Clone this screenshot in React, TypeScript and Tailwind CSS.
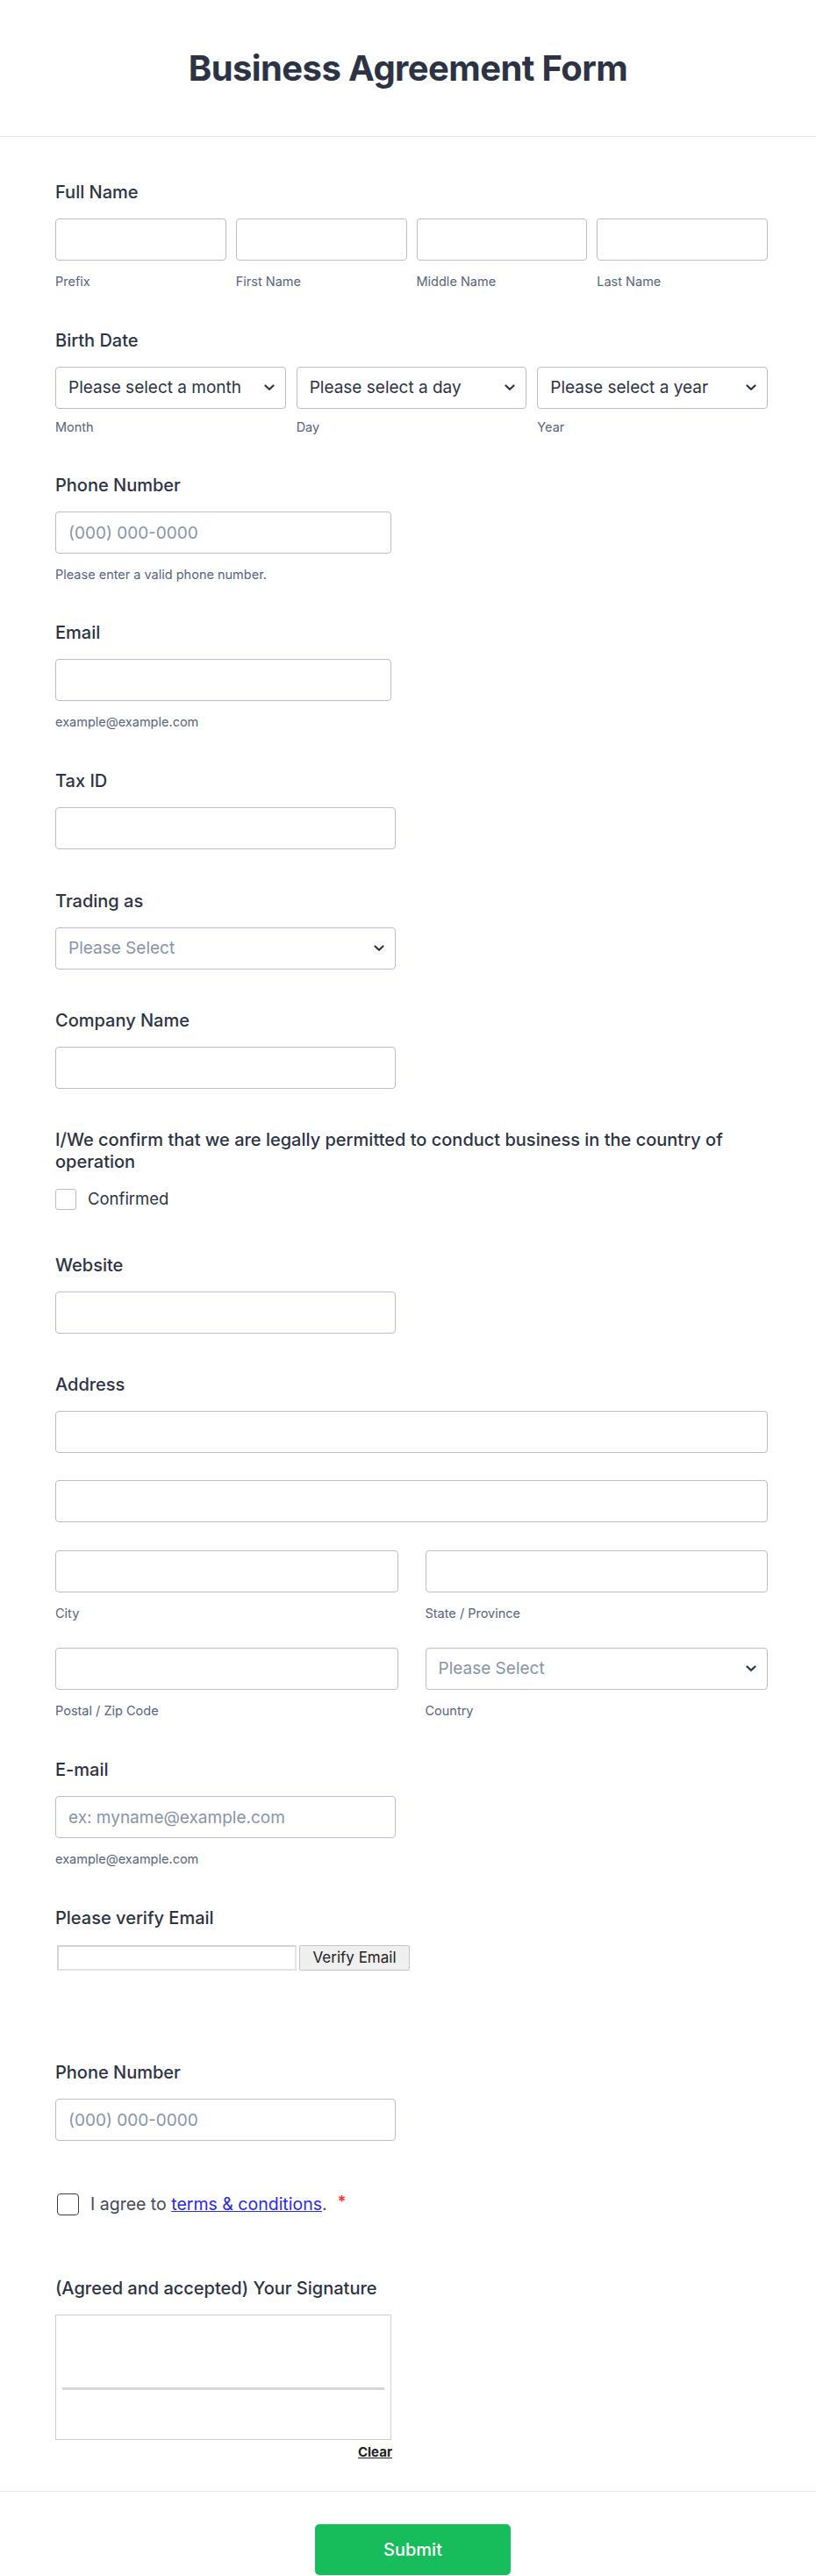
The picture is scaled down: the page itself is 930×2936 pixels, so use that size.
import React from "react";

const labelCls = "block text-[20px] leading-6 font-medium text-[#2c3345]";
const subCls = "block text-[14.5px] leading-[18px] text-[#57647e]";
const inputCls =
  "block h-12 w-full rounded-[4px] border border-[#b8bdc9] bg-white px-[14px] text-[19px] text-[#2c3345] placeholder:text-[#8894ab] outline-none";

function Chevron() {
  return (
    <svg width="12" height="8" viewBox="0 0 12 8" fill="none" className="pointer-events-none absolute right-[13px] top-1/2 -translate-y-1/2">
      <path d="M1.5 1.5L6 5.8L10.5 1.5" stroke="#2c3345" strokeWidth="2.2" strokeLinecap="round" strokeLinejoin="round" />
    </svg>
  );
}

function Select({ text, muted }: { text: string; muted?: boolean }) {
  return (
    <div className="relative">
      <select
        className={`block h-12 w-full appearance-none rounded-[4px] border border-[#b8bdc9] bg-white pl-[14px] pr-8 text-[19px] outline-none ${
          muted ? "text-[#8894ab]" : "text-[#2c3345]"
        }`}
        defaultValue=""
      >
        <option value="">{text}</option>
      </select>
      <Chevron />
    </div>
  );
}

function Sub({ children, tight }: { children: React.ReactNode; tight?: boolean }) {
  return <span className={`${subCls} ${tight ? "mt-[12px]" : "mt-[15px]"}`}>{children}</span>;
}

export default function App() {
  return (
    <div className="min-h-screen bg-white font-[Inter,sans-serif] text-[#2c3345]">
      <header className="flex h-[156px] items-center justify-center border-b border-[#e3e5ea]">
        <h1 className="text-[40px] font-bold leading-none tracking-[-0.6px] text-[#2c3345]">Business Agreement Form</h1>
      </header>

      <form className="pl-[63px] pr-[55px] pt-[51px]" onSubmit={(e) => e.preventDefault()}>
        {/* Full Name */}
        <div className="mb-[46px]">
          <label className={`${labelCls} mb-[18px]`}>Full Name</label>
          <div className="grid grid-cols-4 gap-[11px]">
            {["Prefix", "First Name", "Middle Name", "Last Name"].map((s) => (
              <div key={s}>
                <input className={inputCls} />
                <Sub>{s}</Sub>
              </div>
            ))}
          </div>
        </div>

        {/* Birth Date */}
        <div className="mb-[45px]">
          <label className={`${labelCls} mb-[18px]`}>Birth Date</label>
          <div className="grid grid-cols-3 gap-[12px]">
            {[
              ["Please select a month", "Month"],
              ["Please select a day", "Day"],
              ["Please select a year", "Year"],
            ].map(([t, s]) => (
              <div key={s}>
                <Select text={t} />
                <Sub tight>{s}</Sub>
              </div>
            ))}
          </div>
        </div>

        {/* Phone Number */}
        <div className="mb-[45px] w-[383px]">
          <label className={`${labelCls} mb-[18px]`}>Phone Number</label>
          <input className={inputCls} placeholder="(000) 000-0000" />
          <Sub>Please enter a valid phone number.</Sub>
        </div>

        {/* Email */}
        <div className="mb-[46px] w-[383px]">
          <label className={`${labelCls} mb-[18px]`}>Email</label>
          <input className={inputCls} />
          <Sub>example@example.com</Sub>
        </div>

        {/* Tax ID */}
        <div className="mb-[47px] w-[388px]">
          <label className={`${labelCls} mb-[18px]`}>Tax ID</label>
          <input className={inputCls} />
        </div>

        {/* Trading as */}
        <div className="mb-[46px] w-[388px]">
          <label className={`${labelCls} mb-[18px]`}>Trading as</label>
          <Select text="Please Select" muted />
        </div>

        {/* Company Name */}
        <div className="mb-[46px] w-[388px]">
          <label className={`${labelCls} mb-[18px]`}>Company Name</label>
          <input className={inputCls} />
        </div>

        {/* Legal confirmation */}
        <div className="mb-[51px]">
          <label className="mb-[18px] block text-[20px] font-medium leading-[25px] text-[#2c3345]">
            I/We confirm that we are legally permitted to conduct business in the country of operation
          </label>
          <label className="flex h-6 items-center gap-[13px]">
            <span className="block h-6 w-6 rounded-[3px] border border-[#b8bdc9] bg-white" />
            <span className="text-[18.5px] text-[#2c3345]">Confirmed</span>
          </label>
        </div>

        {/* Website */}
        <div className="mb-[46px] w-[388px]">
          <label className={`${labelCls} mb-[18px]`}>Website</label>
          <input className={inputCls} />
        </div>

        {/* Address */}
        <div className="mb-[46px]">
          <label className={`${labelCls} mb-[18px]`}>Address</label>
          <input className={`${inputCls} mb-[31px]`} />
          <input className={`${inputCls} mb-[32px]`} />
          <div className="grid grid-cols-2 gap-x-[31px] gap-y-[30px]">
            <div>
              <input className={inputCls} />
              <Sub>City</Sub>
            </div>
            <div>
              <input className={inputCls} />
              <Sub>State / Province</Sub>
            </div>
            <div>
              <input className={inputCls} />
              <Sub>Postal / Zip Code</Sub>
            </div>
            <div>
              <Select text="Please Select" muted />
              <Sub>Country</Sub>
            </div>
          </div>
        </div>

        {/* E-mail */}
        <div className="mb-[46px] w-[388px]">
          <label className={`${labelCls} mb-[18px]`}>E-mail</label>
          <input className={inputCls} placeholder="ex: myname@example.com" />
          <Sub>example@example.com</Sub>
        </div>

        {/* Verify email */}
        <div className="mb-[104px]">
          <label className={`${labelCls} mb-[19px]`}>Please verify Email</label>
          <div className="flex items-center gap-[3px] pl-[2px]">
            <input className="block h-[29px] w-[273px] border-2 border-t-[#d4d4d4] border-l-[#d4d4d4] border-b-[#e3e3e3] border-r-[#e3e3e3] bg-white outline-none" />
            <button
              type="button"
              className="h-[29px] w-[126px] rounded-[2px] border border-[#c4c4c4] bg-[#efefef] text-[17px] text-[#222]"
            >
              Verify Email
            </button>
          </div>
        </div>

        {/* Phone Number (second) */}
        <div className="mb-[60px] w-[388px]">
          <label className={`${labelCls} mb-[18px]`}>Phone Number</label>
          <input className={inputCls} placeholder="(000) 000-0000" />
        </div>

        {/* Terms */}
        <div className="mb-[71px] flex h-[25px] items-center pl-[2px]">
          <span className="block h-[25px] w-[25px] rounded-[4px] border-[1.5px] border-[#3a3f4b] bg-white" />
          <span className="ml-[13px] text-[19.5px] text-[#454a57]">
            I agree to{" "}
            <a href="#" className="text-[#2929e8] underline">
              terms &amp; conditions
            </a>
            .
          </span>
          <span className="ml-[12px] -mt-[8px] text-[18px] font-bold leading-none text-[#f23a3c]">*</span>
        </div>

        {/* Signature */}
        <div className="w-[384px]">
          <label className={`${labelCls} mb-[18px]`}>(Agreed and accepted) Your Signature</label>
          <div className="h-[143px] w-[383px] border border-[#cfcfcf] bg-white px-[7px] pt-[82px]">
            <div className="h-[3px] w-full bg-[#d6d6d6]" />
          </div>
          <div className="mt-[6px] flex justify-end">
            <span className="text-[15px] font-bold leading-4 text-[#222] underline">Clear</span>
          </div>
        </div>
        <div className="h-[36px]" />
      </form>

      <div className="flex justify-center border-t border-[#e6e8ec] pl-[66px] pr-[55px] pt-[37px] pb-[2px]">
        <button
          type="submit"
          className="h-[58px] w-[223px] rounded-[5px] bg-[#18bd5b] text-[20px] font-medium text-white"
        >
          Submit
        </button>
      </div>
    </div>
  );
}
